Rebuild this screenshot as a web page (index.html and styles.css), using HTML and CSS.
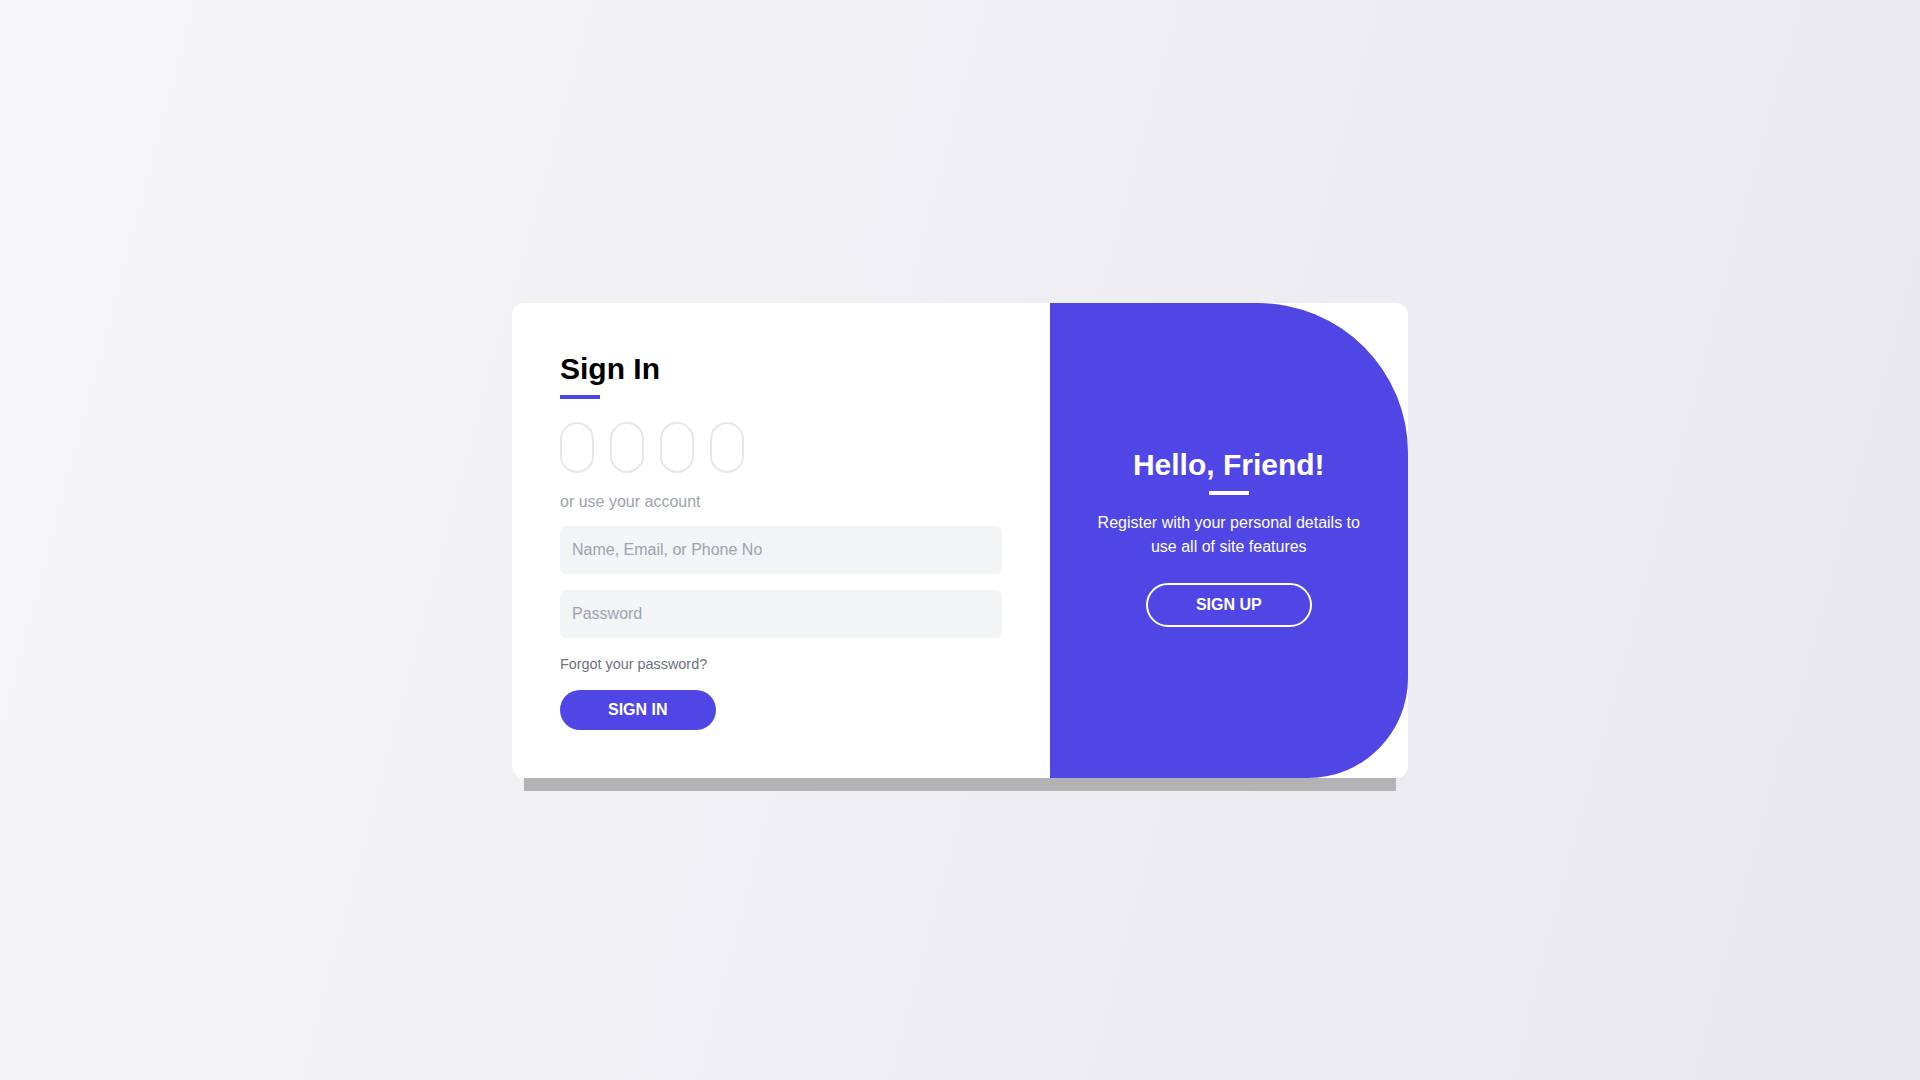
FILE: index.html
```html
<!DOCTYPE html>
<html lang="en">
<head>
<meta charset="utf-8">
<title>Sign In</title>
<link rel="stylesheet" href="styles.css">
</head>
<body>
<main class="page">
  <div class="card">
    <section class="signin">
      <h1 class="title">Sign In</h1>
      <div class="bar"></div>
      <div class="socials">
        <a class="social" href="#" aria-label="social 1"></a>
        <a class="social" href="#" aria-label="social 2"></a>
        <a class="social" href="#" aria-label="social 3"></a>
        <a class="social" href="#" aria-label="social 4"></a>
      </div>
      <p class="muted">or use your account</p>
      <input class="field first" type="text" placeholder="Name, Email, or Phone No">
      <input class="field" type="password" placeholder="Password">
      <a class="forgot" href="#">Forgot your password?</a>
      <button class="btn-primary" type="button">SIGN IN</button>
    </section>
    <section class="promo">
      <h2 class="promo-title">Hello, Friend!</h2>
      <div class="bar bar-white"></div>
      <p class="promo-text">Register with your personal details to use all of site features</p>
      <button class="btn-ghost" type="button">SIGN UP</button>
    </section>
  </div>
</main>
</body>
</html>
```
FILE: styles.css
```css
* { box-sizing: border-box; }
html, body { margin: 0; padding: 0; height: 100%; }
body {
  font-family: "Liberation Sans", Arial, sans-serif;
  background: linear-gradient(105deg, #f6f6f8 0%, #e8e7ed 100%);
  color: #000;
}
.page {
  min-height: 100vh;
  display: flex;
  align-items: center;
  justify-content: center;
}
.card {
  width: 896px;
  display: flex;
  background: #fff;
  border-radius: 12px;
  box-shadow: 0 25px 0 -12px #b3b3b5;
}
.signin {
  width: 60%;
  padding: 48px;
  display: flex;
  flex-direction: column;
  align-items: flex-start;
}
.title {
  margin: 0;
  font-size: 30px;
  line-height: 36px;
  font-weight: 700;
  color: #000;
}
.bar {
  width: 40px;
  height: 4px;
  margin-top: 8px;
  background: #4f46e5;
}
.bar-white { background: #fff; }
.socials {
  display: flex;
  gap: 16px;
  margin-top: 23px;
}
.social {
  display: block;
  width: 34px;
  height: 51px;
  border: 2px solid #e5e7eb;
  border-radius: 999px;
}
.muted {
  margin: 17px 0 0;
  font-size: 16px;
  line-height: 24px;
  color: #9ca3af;
}
.field {
  display: block;
  width: 100%;
  height: 48px;
  margin-top: 16px;
  padding: 0 12px;
  border: none;
  border-radius: 6px;
  background: #f3f4f6;
  font-family: inherit;
  font-size: 16px;
  color: #111827;
  outline: none;
}
.field.first { margin-top: 12px; }
.field::placeholder { color: #9ca3af; }
.forgot {
  margin-top: 16px;
  font-size: 14.4px;
  line-height: 20px;
  color: #6b7280;
  text-decoration: none;
}
.btn-primary {
  margin-top: 16px;
  padding: 8px 48px;
  border: none;
  border-radius: 999px;
  background: #4f46e5;
  color: #fff;
  font-family: inherit;
  font-size: 16px;
  line-height: 24px;
  font-weight: 700;
  cursor: pointer;
}
.promo {
  width: 40%;
  background: #4f46e5;
  color: #fff;
  border-radius: 0 150px 100px 0;
  padding: 0 40px 7px;
  display: flex;
  flex-direction: column;
  align-items: center;
  justify-content: center;
  text-align: center;
}
.promo-title {
  margin: 0;
  font-size: 30px;
  line-height: 36px;
  font-weight: 700;
}
.promo-text {
  margin: 16px 0 0;
  font-size: 16px;
  line-height: 24px;
}
.btn-ghost {
  margin-top: 24px;
  padding: 8px 48px;
  border: 2px solid #fff;
  border-radius: 999px;
  background: transparent;
  color: #fff;
  font-family: inherit;
  font-size: 16px;
  line-height: 24px;
  font-weight: 700;
  cursor: pointer;
}
```
